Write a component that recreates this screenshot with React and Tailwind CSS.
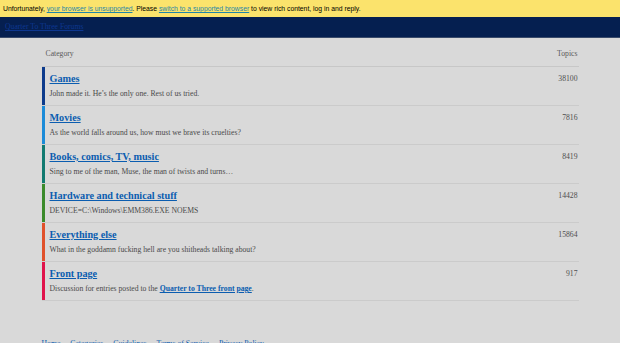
import React from "react";

const categories = [
  { name: "Games", desc: "John made it. He’s the only one. Rest of us tried.", topics: "38100", color: "bg-[#0d3b8c]" },
  { name: "Movies", desc: "As the world falls around us, how must we brave its cruelties?", topics: "7816", color: "bg-[#1b8bd8]" },
  { name: "Books, comics, TV, music", desc: "Sing to me of the man, Muse, the man of twists and turns…", topics: "8419", color: "bg-[#117a70]" },
  { name: "Hardware and technical stuff", desc: "DEVICE=C:\\Windows\\EMM386.EXE NOEMS", topics: "14428", color: "bg-[#3b8a2b]" },
  { name: "Everything else", desc: "What in the goddamn fucking hell are you shitheads talking about?", topics: "15864", color: "bg-[#e0512b]" },
  { name: "Front page", desc: null, topics: "917", color: "bg-[#e0134b]" },
];

function Row({ cat }) {
  return (
    <div className="flex h-[39px] border-b border-[#cbcbcb]">
      <div className={`w-[3px] shrink-0 ${cat.color}`} />
      <div className="flex-1 pl-[5px] pt-[6px]">
        <a href="#" className="block w-fit text-[10.2px] leading-[12px] font-bold text-[#0b5db0] underline">
          {cat.name}
        </a>
        <p className="mt-[4px] text-[7.7px] leading-[10px] text-[#4a4a4a]">
          {cat.desc ?? (
            <>
              Discussion for entries posted to the{" "}
              <a href="#" className="font-bold text-[#0b5db0] underline">Quarter to Three front page</a>.
            </>
          )}
        </p>
      </div>
      <div className="pt-[7px] pr-[1px] text-[7.7px] leading-[10px] text-[#4f4f4f]">{cat.topics}</div>
    </div>
  );
}

export default function App() {
  return (
    <div className="min-h-screen bg-[#d9d9d9] font-['Liberation_Serif',serif]">
      <div className="h-[17px] bg-[#fbe36c] pl-[3px] font-['Liberation_Sans',sans-serif] text-[6.8px] leading-[17px] text-black">
        Unfortunately, <a href="#" className="text-[#1f86a9] underline">your browser is unsupported</a>. Please{" "}
        <a href="#" className="text-[#1f86a9] underline">switch to a supported browser</a> to view rich content, log in and reply.
      </div>
      <div className="flex h-[21px] items-center border-b border-[#3a4b6b] bg-[#051f50] pl-[5px]">
        <a href="#" className="text-[7.7px] leading-[10px] text-[#0d3790] underline">Quarter To Three Forums</a>
      </div>

      <div className="mx-auto w-[537px] pt-[11px]">
        <div className="flex justify-between border-b border-[#c7c7c7] pb-[7px] pl-[4px] pr-[1px] text-[7.7px] leading-[10px] text-[#595959]">
          <span>Category</span>
          <span>Topics</span>
        </div>
        {categories.map((c) => (
          <Row key={c.name} cat={c} />
        ))}

        <div className="mt-[38px] flex gap-[10px] text-[7.7px] leading-[10px] text-[#0b5db0]">
          <a href="#" className="underline">Home</a>
          <a href="#" className="underline">Categories</a>
          <a href="#" className="underline">Guidelines</a>
          <a href="#" className="underline">Terms of Service</a>
          <a href="#" className="underline">Privacy Policy</a>
        </div>
      </div>
    </div>
  );
}
